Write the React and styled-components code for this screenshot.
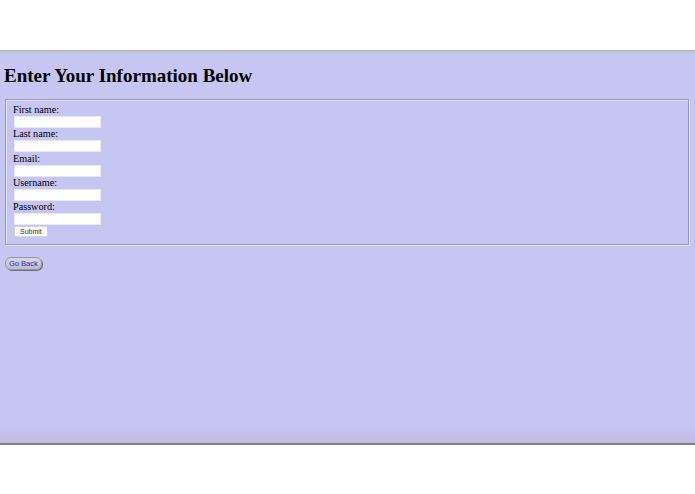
import React from 'react';
import styled, {createGlobalStyle} from 'styled-components';

const Global = createGlobalStyle`
  html, body {
    margin: 0;
    padding: 0;
    background: #ffffff;
  }
  body {
    font-family: "Liberation Serif", "Times New Roman", serif;
    color: #000;
  }
`;

const TopBlank = styled.div`
  height: 50px;
  background: #fff;
`;

const Page = styled.main`
  height: 391px;
  border-top: 2px solid #b9b9bb;
  border-bottom: 2px solid #8a7c80;
  background: linear-gradient(to bottom, #c7c5f2 0, #c7c5f2 376px, #c2bbe2 391px);
  padding: 0 6px 0 5px;
  box-sizing: content-box;
  display: flex;
  flex-direction: column;
`;

const Heading = styled.h1`
  margin: 13px 0 0 -1px;
  font-size: 19px;
  font-weight: bold;
  line-height: 22px;
`;

const Fieldset = styled.fieldset`
  margin: 12px 0 0 0;
  padding: 4px 7px 7px 7px;
  border: 1px solid #9d9cb8;
  box-shadow: inset 1px 1px 0 #e4e3fa, 1px 1px 0 #e4e3fa;
  display: flex;
  flex-direction: column;
  align-items: flex-start;
`;

const Field = styled.div`
  display: flex;
  flex-direction: column;
  align-items: flex-start;
  height: 24.25px;
`;

const Label = styled.label`
  font-size: 10.2px;
  line-height: 11px;
  height: 11px;
  color: #000;
`;

const Input = styled.input`
  width: 85px;
  height: 10px;
  margin: 1px 0 0 1px;
  padding: 0;
  border: 1px solid #e8e8f2;
  background: #fff;
  box-sizing: content-box;
`;

const SubmitButton = styled.button`
  margin: 1px 0 0 1px;
  height: 11px;
  padding: 0 5px;
  font-family: "Liberation Sans", Arial, sans-serif;
  font-size: 7px;
  line-height: 9px;
  color: #333;
  background: #fff;
  border: 1px solid #d4d4dc;
  border-radius: 2px;
`;

const BackButton = styled.button`
  align-self: flex-start;
  margin: 12px 0 0 0;
  height: 13px;
  padding: 0 3px;
  font-family: "Liberation Sans", Arial, sans-serif;
  font-size: 7.5px;
  line-height: 10px;
  color: #1f2ad0;
  background: linear-gradient(to bottom, #d8d8e4, #bcbccc);
  border: 1px solid #9797a8;
  border-radius: 6px;
  box-shadow: 1px 1px 0 #6e6e7c;
`;

const BottomBlank = styled.div`
  height: 50px;
  background: #fff;
`;

const fields = [
  {label: 'First name:', type: 'text'},
  {label: 'Last name:', type: 'text'},
  {label: 'Email:', type: 'email'},
  {label: 'Username:', type: 'text'},
  {label: 'Password:', type: 'password'},
];

export default function App() {
  return <>
    <Global />
    <TopBlank />
    <Page>
      <Heading>Enter Your Information Below</Heading>
      <Fieldset>
        {fields.map((f, i) => <Field key={i}>
          <Label>{f.label}</Label>
          <Input type={f.type} />
        </Field>)}
        <SubmitButton type="submit">Submit</SubmitButton>
      </Fieldset>
      <BackButton type="button">Go Back</BackButton>
    </Page>
    <BottomBlank />
  </>;
}
